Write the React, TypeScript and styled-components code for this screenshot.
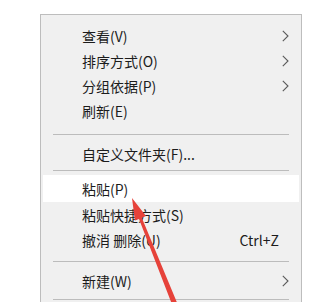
import React from 'react';
import styled, { createGlobalStyle } from 'styled-components';

const GlobalStyle = createGlobalStyle`
  html, body {
    margin: 0;
    padding: 0;
    background: #ffffff;
    overflow: hidden;
  }
`;

type Item =
  | { kind: 'item'; label: string; shortcut?: string; sub?: boolean; active?: boolean }
  | { kind: 'sep'; top: number; bottom: number };

const items: Item[] = [
  { kind: 'item', label: '查看(V)', sub: true },
  { kind: 'item', label: '排序方式(O)', sub: true },
  { kind: 'item', label: '分组依据(P)', sub: true },
  { kind: 'item', label: '刷新(E)' },
  { kind: 'sep', top: 11, bottom: 6 },
  { kind: 'item', label: '自定义文件夹(F)...' },
  { kind: 'sep', top: 4, bottom: 4 },
  { kind: 'item', label: '粘贴(P)', active: true },
  { kind: 'item', label: '粘贴快捷方式(S)' },
  { kind: 'item', label: '撤消 删除(U)', shortcut: 'Ctrl+Z' },
  { kind: 'sep', top: 9, bottom: 6 },
  { kind: 'item', label: '新建(W)', sub: true },
  { kind: 'sep', top: 6, bottom: 6 },
];

export default function App() {
  return (
    <Page>
      <GlobalStyle />
      <Menu>
        {items.map((it, i) =>
          it.kind === 'sep' ? (
            <Separator key={i} $top={it.top} $bottom={it.bottom} />
          ) : (
            <Row key={i} $active={it.active}>
              <Label>{it.label}</Label>
              <Shortcut>{it.shortcut}</Shortcut>
              <ArrowSlot>
                {it.sub && (
                  <svg width="7" height="12" viewBox="0 0 7 12">
                    <polyline
                      points="0.8,0.8 6,6 0.8,11.2"
                      fill="none"
                      stroke="#5a5a5a"
                      strokeWidth="1.1"
                    />
                  </svg>
                )}
              </ArrowSlot>
            </Row>
          ),
        )}
      </Menu>
      <Pointer width="319" height="302" viewBox="0 0 319 302">
        <polygon
          points="132,198 146,216 141.8,217.7 178,305 173,307 139,218.9 134.9,220.6"
          fill="#e6423a"
        />
      </Pointer>
    </Page>
  );
}

const Page = styled.div`
  position: relative;
  width: 319px;
  height: 302px;
  padding: 14px 0 0 40px;
  box-sizing: border-box;
  font-family: 'Noto Sans CJK SC', 'Noto Sans', sans-serif;
`;

const Menu = styled.div`
  width: 262px;
  box-sizing: border-box;
  padding: 8px 2px 20px;
  background: #f0f0f0;
  border: 1px solid #bdbdbd;
  display: flex;
  flex-direction: column;
`;

const Row = styled.div<{ $active?: boolean }>`
  display: flex;
  align-items: center;
  height: ${(p) => (p.$active ? 27 : 25)}px;
  padding: 0 10px 0 39px;
  background: ${(p) => (p.$active ? '#ffffff' : 'transparent')};
  color: #1c1c1c;
  font-size: 14px;
`;

const Label = styled.span`
  flex: 1;
  white-space: nowrap;
`;

const Shortcut = styled.span`
  white-space: nowrap;
`;

const ArrowSlot = styled.span`
  display: flex;
  justify-content: flex-end;
  align-items: center;
  width: 10px;
`;

const Separator = styled.div<{ $top: number; $bottom: number }>`
  height: 1px;
  margin: ${(p) => p.$top}px 10px ${(p) => p.$bottom}px;
  background: #bcbcbc;
`;

const Pointer = styled.svg`
  position: absolute;
  left: 0;
  top: 0;
  pointer-events: none;
`;
